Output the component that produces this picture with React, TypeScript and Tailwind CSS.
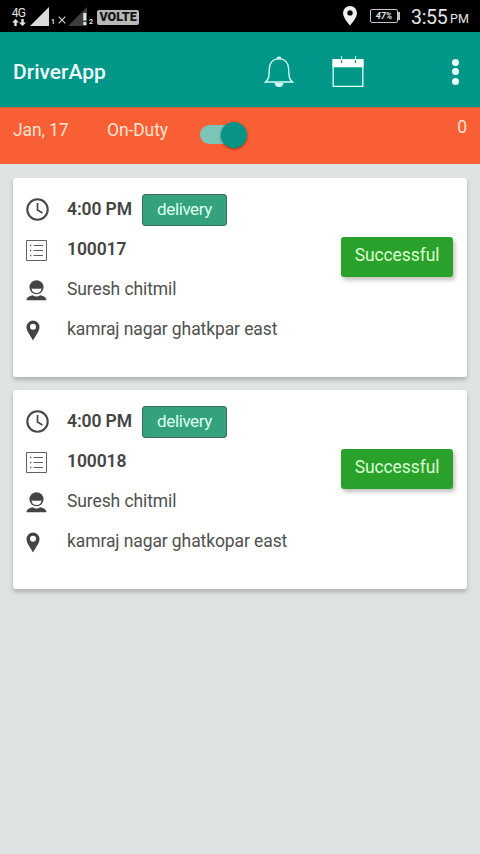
interface Delivery {
  id: string;
  time: string;
  customer: string;
  address: string;
}

const deliveries: Delivery[] = [
  {
    id: "100017",
    time: "4:00 PM",
    customer: "Suresh chitmil",
    address: "kamraj nagar ghatkpar east",
  },
  {
    id: "100018",
    time: "4:00 PM",
    customer: "Suresh chitmil",
    address: "kamraj nagar ghatkopar east",
  },
];

function StatusBar() {
  return (
    <div className="flex h-8 items-center bg-black text-[#e4e4e4]">
      <div className="ml-[11px] flex w-[15px] flex-col items-center pt-px">
        <span className="text-[12px] leading-[10px] tracking-[-0.8px]">4G</span>
        <svg className="mt-px" width="14" height="7" viewBox="0 0 14 7" fill="#e4e4e4">
          <path d="M3.5 0 7 3.5H4.7V7H2.3V3.5H0zM10.5 7 14 3.5h-2.3V0H9.3v3.5H7z" />
        </svg>
      </div>
      <svg className="ml-1" width="19" height="19" viewBox="0 0 19 19" fill="#dcdcdc">
        <path d="M19 0v19H0z" />
      </svg>
      <span className="ml-[2px] mt-3 text-[7px] font-bold leading-none">1</span>
      <svg className="ml-[3px] mt-2" width="8" height="8" viewBox="0 0 8 8" stroke="#cfcfcf" strokeWidth="1.2">
        <path d="m.7.7 6.6 6.6M7.3.7.7 7.3" />
      </svg>
      <svg className="ml-[2px]" width="21" height="19" viewBox="0 0 21 19">
        <path d="M19 0v19H0z" fill="#3d3d3d" />
        <path d="M15.3 6h3v7.5h-3zM15.3 15h3v3h-3z" fill="#e4e4e4" />
      </svg>
      <span className="mt-3 text-[7px] font-bold leading-none">2</span>
      <span className="ml-[4px] mt-0.5 flex h-[15px] w-[42px] items-center justify-center rounded-[2px] bg-[#b8b8b8] text-[12.500px] font-black leading-none text-[#161616]">
        VOLTE
      </span>

      <svg className="ml-auto" width="14" height="20" viewBox="0 0 14 20" fill="#f0f0f0">
        <path
          fillRule="evenodd"
          d="M7 0a7 7 0 0 0-7 7c0 5 7 12.500 7 12.500S14 12 14 7a7 7 0 0 0-7-7zm0 4.200a2.700 2.700 0 1 1 0 5.400 2.700 2.700 0 0 1 0-5.400z"
        />
      </svg>
      <div className="ml-[13px] flex items-center">
        <span className="flex h-[14px] w-[28px] items-center justify-center rounded-[2px] border border-[#c4c4c4] text-[9px] font-bold italic leading-none">
          47%
        </span>
        <span className="h-2 w-[2px] bg-[#c4c4c4]" />
      </div>
      <span className="ml-[11px] mt-[3px] w-[38px] whitespace-nowrap text-[19.500px] leading-none tracking-[-0.3px]">3:55</span>
      <span className="ml-[1px] mr-[11px] mt-[6px] w-[19px] text-[12.500px] leading-none">PM</span>
    </div>
  );
}

function BellIcon() {
  return (
    <svg width="30" height="32" viewBox="0 0 30 32" fill="none" stroke="#d2fff7" strokeWidth="1.400">
      <path d="M1.500 26C5 23.500 5.200 20 5.300 13.500 5.400 7 9 2.900 15 2.900S24.600 7 24.700 13.500C24.800 20 25 23.500 28.500 26z" />
      <path d="M12.500 2.700a2.500 2.100 0 0 1 5 0z" fill="#d2fff7" stroke="none" />
      <path d="M10.500 27h9c-.2 2.500-2 4-4.500 4s-4.300-1.500-4.500-4z" fill="#d2fff7" stroke="none" />
    </svg>
  );
}

function CalendarIcon() {
  return (
    <svg width="32" height="32" viewBox="0 0 32 32">
      <path d="M1.200 4h29.600v26.400H1.200z" fill="none" stroke="#d2fff7" strokeWidth="1.400" />
      <path d="M.5 3.300h31v8H.5z" fill="#fff" />
      <path d="M9.500 3v4M23.500 3v4" stroke="#27766f" strokeWidth="1.300" />
      <path d="M9.500 0v4.500M23.500 0v4.500" stroke="#d2fff7" strokeWidth="1.100" />
    </svg>
  );
}

function Header() {
  return (
    <header className="flex h-[75px] items-center bg-[#009688] pb-px pt-[5px]">
      <h1 className="ml-[13px] w-[251px] text-[21px] font-medium leading-6 text-[#effffb]">DriverApp</h1>
      <BellIcon />
      <div className="ml-[38px]">
        <CalendarIcon />
      </div>
      <div className="ml-auto mr-[21px] flex flex-col gap-[2.500px]">
        <span className="size-[7px] rounded-full bg-[#e6fffb]" />
        <span className="size-[7px] rounded-full bg-[#e6fffb]" />
        <span className="size-[7px] rounded-full bg-[#e6fffb]" />
      </div>
    </header>
  );
}

function DutyBar() {
  return (
    <div className="flex h-[57px] border-t border-[#c9653f] bg-[#f95f34] text-[17.500px] leading-5 tracking-[-0.1px] text-[#ffe3d0]">
      <span className="ml-[13px] mt-3 w-[94px]">Jan, 17</span>
      <span className="mt-3 w-[93px]">On-Duty</span>
      <div className="mt-[17px] flex h-[19px] w-[47px] items-center justify-end rounded-full bg-[#7cc4b8]">
        <span className="size-[26px] shrink-0 rounded-full bg-[#079385] shadow-[0_1px_3px_rgba(0,0,0,0.45)]" />
      </div>
      <span className="ml-auto mr-[13px] mt-[9px]">0</span>
    </div>
  );
}

function ClockIcon() {
  return (
    <svg width="23" height="23" viewBox="0 0 23 23" fill="none" stroke="#484848">
      <circle cx="11.500" cy="11.500" r="10.200" strokeWidth="2.100" />
      <path d="M11.500 5v7l5 2.900" strokeWidth="1.700" />
    </svg>
  );
}

function ListIcon() {
  return (
    <svg className="mt-px" width="21" height="21" viewBox="0 0 21 21" fill="none" stroke="#606060">
      <path d="M.5.5h20v20H.5z" strokeWidth="1" />
      <path d="M7.500 5.500H17M7.500 10.500H17M7.500 15.500H17" strokeWidth="1" />
      <path d="M4 5.500h1.300M4 10.500h1.300M4 15.500h1.300" strokeWidth="1.400" />
    </svg>
  );
}

function PersonIcon() {
  return (
    <svg className="mt-px" width="21" height="21" viewBox="0 0 21 21" fill="#444">
      <path d="M.5 20.300c.2-3 2.700-4.500 6.300-5.100 2.200 1.600 5.200 1.600 7.400 0 3.600.6 6.100 2.100 6.300 5.100z" />
      <circle cx="10.500" cy="7.300" r="7" />
      <path d="M5.500 8.400c3.300.4 6.700.4 10 0-.3 2.900-2.300 4.600-5 4.600s-4.700-1.700-5-4.600z" fill="#fff" />
    </svg>
  );
}

function PinIcon() {
  return (
    <svg className="mt-px" width="14" height="21" viewBox="0 0 14 21" fill="#444">
      <path
        fillRule="evenodd"
        d="M7 .5A6.500 6.500 0 0 0 .5 7C.5 11.500 4.500 15.500 7 20.500 9.500 15.500 13.500 11.500 13.500 7A6.500 6.500 0 0 0 7 .5zm0 3.300a3 3 0 1 1 0 6 3 3 0 0 1 0-6z"
      />
    </svg>
  );
}

function Row({ icon, children }: { icon: React.ReactNode; children: React.ReactNode }) {
  return (
    <div className="flex h-10 items-center">
      <div className="w-[41px] shrink-0">{icon}</div>
      {children}
    </div>
  );
}

function DeliveryCard({ delivery }: { delivery: Delivery }) {
  return (
    <article className="flex h-[199px] justify-between rounded-[3px] bg-white pl-[13px] pr-[14px] pt-3 text-[17.500px] tracking-[-0.1px] text-[#505050] shadow-[0_3px_4px_rgba(0,0,0,0.22)]">
      <div>
        <Row icon={<ClockIcon />}>
          <span className="w-[75px] whitespace-nowrap font-semibold text-[#454545]">{delivery.time}</span>
          <span className="flex h-8 w-[85px] items-center justify-center rounded-[3px] border-[1.500px] border-[#3d6b5c] bg-[#34a27d] text-[17px] tracking-[-0.4px] text-[#dcfff0]">
            delivery
          </span>
        </Row>
        <Row icon={<ListIcon />}>
          <span className="font-semibold text-[#454545]">{delivery.id}</span>
        </Row>
        <Row icon={<PersonIcon />}>
          <span>{delivery.customer}</span>
        </Row>
        <Row icon={<PinIcon />}>
          <span>{delivery.address}</span>
        </Row>
      </div>
      <button className="mt-[47.500px] flex h-10 w-28 justify-center rounded-[3px] bg-[#2aa12b] pt-[6px] leading-6 tracking-[-0.1px] text-[#d8ffd0] shadow-[2px_3px_4px_rgba(0,0,0,0.25)]">
        Successful
      </button>
    </article>
  );
}

export default function App() {
  return (
    <div className="h-[854px] w-[480px] overflow-hidden bg-[#e0e3e4] font-['Roboto',sans-serif]">
      <StatusBar />
      <Header />
      <DutyBar />
      <main className="flex flex-col gap-[13px] px-[13px] pt-[13.500px]">
        {deliveries.map((delivery) => (
          <DeliveryCard key={delivery.id} delivery={delivery} />
        ))}
      </main>
    </div>
  );
}
